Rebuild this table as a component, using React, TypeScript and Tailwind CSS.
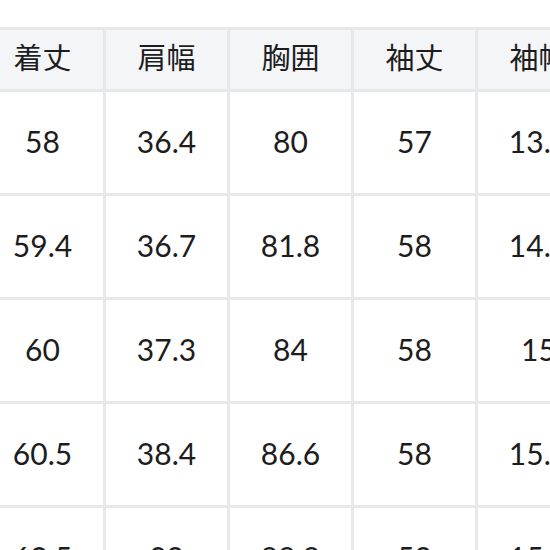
const headers = ["着丈", "肩幅", "胸囲", "袖丈", "袖幅"];

const rows: string[][] = [
  ["58", "36.4", "80", "57", "13.5"],
  ["59.4", "36.7", "81.8", "58", "14.2"],
  ["60", "37.3", "84", "58", "15"],
  ["60.5", "38.4", "86.6", "58", "15.5"],
  ["62.5", "39", "88.8", "59", "15.8"],
];

const cellBase =
  "w-[124px] shrink-0 flex items-center justify-center border-r-[3px] border-[#e7e8ea]";

export default function App() {
  return (
    <div className="w-[550px] h-[550px] overflow-hidden bg-white text-[#1d1d1d]">
      <div className="mt-[27px] ml-[-18px] w-max border-t-[3px] border-[#e7e8ea]">
        <div className="flex border-b-[3px] border-[#e7e8ea] bg-[#f3f5f7]">
          {headers.map((h) => (
            <div
              key={h}
              className={`${cellBase} h-[59px] pb-[5px] text-[29px] font-['Noto_Sans_CJK_JP',sans-serif]`}
            >
              {h}
            </div>
          ))}
        </div>
        {rows.map((row, i) => (
          <div key={i} className="flex border-b-[3px] border-[#e7e8ea]">
            {row.map((v, j) => (
              <div
                key={j}
                className={`${cellBase} h-[101px] pb-[2px] text-[30px] font-['Lato',sans-serif]`}
              >
                {v}
              </div>
            ))}
          </div>
        ))}
      </div>
    </div>
  );
}
